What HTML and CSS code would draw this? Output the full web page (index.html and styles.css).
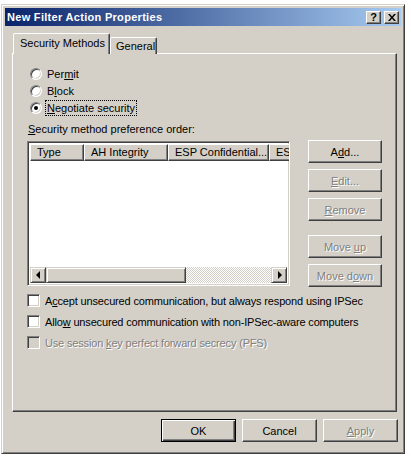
FILE: index.html
```html
<!DOCTYPE html>
<html lang="en">
<head>
    <meta charset="UTF-8">
    <title>New Filter Action Properties</title>
    <link rel="stylesheet" href="styles.css">
</head>
<body>
    <div class="window">
        <div class="titlebar">
            <span class="title">New Filter Action Properties</span>
            <div class="caption-btns">
                <span class="cap-btn help">?</span>
                <span class="cap-btn close">
                    <svg width="8" height="7" viewBox="0 0 8 7"><path d="M0 0h2l2 2.5L6 0h2L5 3.5 8 7H6L4 4.5 2 7H0l3-3.5z" fill="#000"/></svg>
                </span>
            </div>
        </div>

        <div class="body">
            <div class="tabs">
                <div class="tab active">Security Methods</div>
                <div class="tab">General</div>
            </div>

            <div class="panel">
                <div class="radios">
                    <div class="option"><span class="radio"></span><span class="opt-text">Per<u>m</u>it</span></div>
                    <div class="option"><span class="radio"></span><span class="opt-text">B<u>l</u>ock</span></div>
                    <div class="option"><span class="radio checked"></span><span class="opt-text focused"><u>N</u>egotiate security</span></div>
                </div>

                <div class="list-label"><u>S</u>ecurity method preference order:</div>

                <div class="list-row">
                    <div class="listview">
                        <div class="lv-header">
                            <div class="col col-type">Type</div>
                            <div class="col col-ah">AH Integrity</div>
                            <div class="col col-esp">ESP Confidential...</div>
                            <div class="col col-es">ES</div>
                        </div>
                        <div class="lv-body"></div>
                        <div class="hscroll">
                            <span class="sb-btn"><span class="arrow-left"></span></span>
                            <span class="sb-thumb"></span>
                            <span class="sb-track"></span>
                            <span class="sb-btn"><span class="arrow-right"></span></span>
                        </div>
                    </div>

                    <div class="side-btns">
                        <button class="btn">A<u>d</u>d...</button>
                        <button class="btn disabled"><u>E</u>dit...</button>
                        <button class="btn disabled"><u>R</u>emove</button>
                        <button class="btn disabled spaced">Move <u>u</u>p</button>
                        <button class="btn disabled">Move d<u>o</u>wn</button>
                    </div>
                </div>

                <div class="checks">
                    <div class="check-row"><span class="checkbox"></span><span>A<u>c</u>cept unsecured communication, but always respond using IPSec</span></div>
                    <div class="check-row"><span class="checkbox"></span><span>Allo<u>w</u> unsecured communication with non-IPSec-aware computers</span></div>
                    <div class="check-row disabled"><span class="checkbox"></span><span>Use session <u>k</u>ey perfect forward secrecy (PFS)</span></div>
                </div>
            </div>

            <div class="footer">
                <button class="btn default">OK</button>
                <button class="btn">Cancel</button>
                <button class="btn disabled"><u>A</u>pply</button>
            </div>
        </div>
    </div>
</body>
</html>
```

FILE: styles.css
```css
* {
    box-sizing: border-box;
    margin: 0;
    padding: 0;
}
body {
    background: #fff;
    padding: 4px 0 0 1px;
    font-family: 'Liberation Sans', Arial, sans-serif;
    font-size: 11px;
    color: #000;
    white-space: nowrap;
}
u {
    text-underline-offset: 1px;
}
.window {
    width: 404px;
    height: 450px;
    background: #d4d0c8;
    border: 1px solid;
    border-color: #d4d0c8 #404040 #404040 #d4d0c8;
    box-shadow: inset 1px 1px #fff, inset -1px -1px #808080;
    padding: 3px;
}
.titlebar {
    height: 18px;
    background: linear-gradient(to right, #0a246a, #a6caf0);
    display: flex;
    align-items: center;
    justify-content: space-between;
    padding: 0 2px;
}
.title {
    color: #fff;
    font-weight: bold;
    font-size: 11px;
    letter-spacing: 0.3px;
}
.caption-btns {
    display: flex;
    gap: 3px;
}
.cap-btn {
    width: 15px;
    height: 13px;
    background: #d4d0c8;
    border: 1px solid;
    border-color: #fff #404040 #404040 #fff;
    box-shadow: inset -1px -1px #808080;
    display: flex;
    align-items: center;
    justify-content: center;
    font-weight: bold;
    font-size: 11px;
    line-height: 1;
}
.body {
    padding: 7px 4px 0 7px;
}
.tabs {
    display: flex;
    align-items: flex-end;
    margin-left: 1px;
    margin-bottom: -1px;
}
.tab {
    height: 17px;
    width: 47px;
    border: 1px solid;
    border-bottom: none;
    border-color: #fff #404040 transparent #fff;
    box-shadow: inset -1px 0 #808080;
    border-radius: 2px 2px 0 0;
    background: #d4d0c8;
    padding: 2px 0 0 5px;
}
.tab.active {
    height: 21px;
    width: 97px;
    padding: 3px 0 0 6px;
    position: relative;
    z-index: 1;
}
.panel {
    height: 359px;
    border: 1px solid;
    border-color: #fff #404040 #404040 #fff;
    box-shadow: inset -1px -1px #808080;
    padding: 11px 14px 0 14px;
}
.radios {
    margin-left: 3px;
}
.option {
    height: 17px;
    display: flex;
    align-items: center;
}
.radio {
    width: 12px;
    height: 12px;
    border-radius: 50%;
    background: #fff;
    border: 1px solid;
    border-color: #808080 #fff #fff #808080;
    box-shadow: inset 1px 1px #404040, inset -1px -1px #d4d0c8;
    margin-right: 3px;
    display: flex;
    align-items: center;
    justify-content: center;
}
.radio.checked::after {
    content: "";
    width: 4px;
    height: 4px;
    border-radius: 50%;
    background: #000;
}
.opt-text {
    padding: 1px 1px;
    border: 1px dotted transparent;
}
.opt-text.focused {
    border-color: #000;
}
.list-label {
    margin-top: 6px;
    line-height: 14px;
    margin-left: 1px;
}
.list-row {
    display: flex;
    align-items: flex-start;
    gap: 18px;
    margin-top: 5px;
}
.listview {
    width: 265px;
    height: 145px;
    background: #fff;
    border: 1px solid;
    border-color: #808080 #fff #fff #808080;
    box-shadow: inset 1px 1px #404040, inset -1px -1px #d4d0c8;
    padding: 2px;
    display: flex;
    flex-direction: column;
    overflow: hidden;
}
.lv-header {
    display: flex;
    height: 17px;
    flex-shrink: 0;
}
.col {
    flex-shrink: 0;
    height: 17px;
    background: #d4d0c8;
    border: 1px solid;
    border-color: #fff #404040 #404040 #fff;
    box-shadow: inset -1px -1px #808080;
    padding: 1px 0 0 6px;
    overflow: hidden;
}
.col-type { width: 54px; }
.col-ah { width: 84px; }
.col-esp { width: 101px; }
.col-es { width: 40px; }
.lv-body {
    flex: 1;
}
.hscroll {
    display: flex;
    height: 16px;
    flex-shrink: 0;
}
.sb-btn, .sb-thumb {
    height: 16px;
    background: #d4d0c8;
    border: 1px solid;
    border-color: #d4d0c8 #404040 #404040 #d4d0c8;
    box-shadow: inset 1px 1px #fff, inset -1px -1px #808080;
    display: flex;
    align-items: center;
    justify-content: center;
}
.sb-btn {
    width: 16px;
}
.sb-thumb {
    width: 140px;
}
.sb-track {
    flex: 1;
    background: repeating-conic-gradient(#d4d0c8 0 25%, #fff 0 50%) 0 0 / 2px 2px;
}
.arrow-left {
    border-top: 4px solid transparent;
    border-bottom: 4px solid transparent;
    border-right: 4px solid #000;
    margin-right: 1px;
}
.arrow-right {
    border-top: 4px solid transparent;
    border-bottom: 4px solid transparent;
    border-left: 4px solid #000;
    margin-left: 1px;
}
.side-btns {
    display: flex;
    flex-direction: column;
    gap: 6px;
    margin-top: -1px;
}
.btn {
    width: 75px;
    height: 23px;
    background: #d4d0c8;
    border: 1px solid;
    border-color: #fff #404040 #404040 #fff;
    box-shadow: inset -1px -1px #808080;
    font-family: inherit;
    font-size: 11px;
    color: #000;
}
.side-btns .btn {
    width: 74px;
}
.btn.spaced {
    margin-top: 8px;
}
.btn.disabled {
    color: #808080;
    text-shadow: 1px 1px #fff;
}
.btn.default {
    border: 1px solid #000;
    box-shadow: inset 1px 1px #fff, inset -1px -1px #404040, inset -2px -2px #808080;
}
.checks {
    margin-top: 3px;
    letter-spacing: -0.16px;
}
.check-row {
    height: 21px;
    display: flex;
    align-items: center;
}
.checkbox {
    width: 13px;
    height: 13px;
    background: #fff;
    border: 1px solid;
    border-color: #808080 #fff #fff #808080;
    box-shadow: inset 1px 1px #404040, inset -1px -1px #d4d0c8;
    margin-right: 5px;
    flex-shrink: 0;
}
.check-row.disabled {
    color: #808080;
    text-shadow: 1px 1px #fff;
}
.check-row.disabled .checkbox {
    background: #d4d0c8;
}
.footer {
    display: flex;
    justify-content: flex-end;
    gap: 6px;
    margin-top: 7px;
    margin-right: -1px;
}
```
